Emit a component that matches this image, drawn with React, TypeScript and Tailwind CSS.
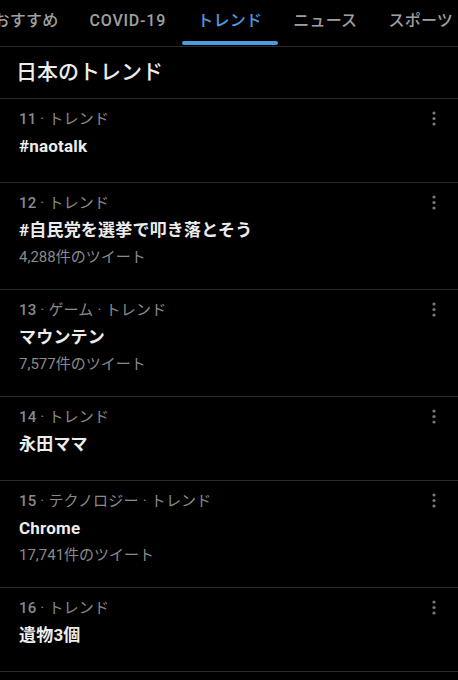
import React from 'react';

interface ITrend {
  rank: number;
  category?: string;
  title: string;
  count?: string;
}

const tabs = [
  { label: 'おすすめ', cls: 'tracking-[0.25px]' },
  { label: 'COVID-19', cls: 'tracking-[0.8px]' },
  { label: 'トレンド', cls: 'tracking-[0.25px]' },
  { label: 'ニュース', cls: 'tracking-[0.25px]' },
  { label: 'スポーツ', cls: 'tracking-[0.25px]' },
];

const trends: ITrend[] = [
  { rank: 11, title: '#naotalk' },
  { rank: 12, title: '#自民党を選挙で叩き落とそう', count: '4,288件のツイート' },
  { rank: 13, category: 'ゲーム', title: 'マウンテン', count: '7,577件のツイート' },
  { rank: 14, title: '永田ママ' },
  { rank: 15, category: 'テクノロジー', title: 'Chrome', count: '17,741件のツイート' },
  { rank: 16, title: '遺物3個' },
];

function MoreIcon() {
  return (
    <svg width="6" height="16" viewBox="0 0 6 16" className="mt-[2px]">
      <circle cx="3" cy="2" r="1.6" fill="#7a7a7a" />
      <circle cx="3" cy="7.5" r="1.6" fill="#7a7a7a" />
      <circle cx="3" cy="13" r="1.6" fill="#7a7a7a" />
    </svg>
  );
}

function TrendRow({ trend }: { trend: ITrend }) {
  return (
    <div className={`flex border-b border-[#2a2a2a] pl-[19px] pr-[21px] pt-[10px] ${trend.count ? 'pb-[22px]' : 'pb-[26px]'}`}>
      <div className="flex-1">
        <div className="text-[15px] leading-[20px] text-[#8a8a8a] tracking-[0.2px]">
          <span className="font-medium">{trend.rank}</span>
          {' · '}
          {trend.category ? `${trend.category} · ` : ''}トレンド
        </div>
        <div className="mt-[7px] text-[17px] leading-[20px] font-bold tracking-[0.2px] text-[#ececec]">{trend.title}</div>
        {trend.count && <div className="mt-[7px] text-[15px] leading-[20px] text-[#8a8a8a]">{trend.count}</div>}
      </div>
      <MoreIcon />
    </div>
  );
}

export default function App() {
  return (
    <div
      className="w-[458px] h-[680px] overflow-hidden bg-black"
      style={{ fontFamily: 'Roboto, "Noto Sans CJK JP", sans-serif' }}
    >
      <div className="flex h-[47px] border-b border-[#2a2a2a] overflow-hidden">
        <div className="flex -ml-[22px] shrink-0">
          {tabs.map((tab) => (
            <div key={tab.label} className="relative flex items-center px-[15.5px] shrink-0">
              <span
                className={`text-[16px] font-medium pb-[10px] pt-[6px] ${tab.cls} ${
                  tab.label === 'トレンド' ? 'text-[#4a9de0]' : 'text-[#a0a0a0]'
                }`}
              >
                {tab.label}
              </span>
              {tab.label === 'トレンド' && (
                <div className="absolute left-0 right-0 bottom-[1px] h-[4px] rounded-full bg-[#4a9de0]" />
              )}
            </div>
          ))}
        </div>
      </div>
      <div className="flex items-center h-[52px] border-b border-[#2a2a2a] pl-[16px]">
        <h1 className="text-[21px] font-medium text-[#ececec]">日本のトレンド</h1>
      </div>
      {trends.map((t) => (
        <TrendRow key={t.rank} trend={t} />
      ))}
    </div>
  );
}
